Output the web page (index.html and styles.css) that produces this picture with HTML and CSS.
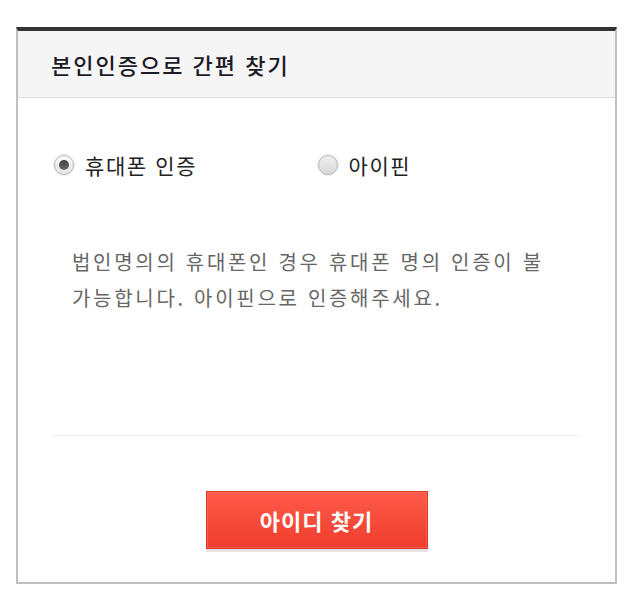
FILE: index.html
```html
<!DOCTYPE html>
<html lang="ko">
    <head>
        <meta charset="UTF-8">
        <meta name="viewport" content="width=device-width, initial-scale=1.0">
        <title>본인인증으로 간편 찾기</title>
        <link rel="stylesheet" href="styles.css">
    </head>
    <body>
        <div class="box">
            <div class="boxHead">
                <h2 class="boxTitle">본인인증으로 간편 찾기</h2>
            </div>
            <div class="boxBody">
                <div class="radioRow">
                    <label class="radioItem">
                        <span class="radio checked"></span>
                        <span class="radioText">휴대폰 인증</span>
                    </label>
                    <label class="radioItem">
                        <span class="radio"></span>
                        <span class="radioText">아이핀</span>
                    </label>
                </div>
                <p class="notice">법인명의의 휴대폰인 경우 휴대폰 명의 인증이 불가능합니다. 아이핀으로 인증해주세요.</p>
                <div class="divider"></div>
                <div class="btnArea">
                    <button class="btnFind">아이디 찾기</button>
                </div>
            </div>
        </div>
    </body>
</html>
```

FILE: styles.css
```css
body{
    margin : 0;
    background-color : #ffffff;
    font-family : "Noto Sans CJK KR", "Noto Sans", sans-serif;
}

.box{
    width : 597px;
    margin-top : 27px;
    margin-left : 16px;
    border : 2px solid #c0c0c0;
    border-top : 4px solid #333333;
    background-color : #ffffff;
}

.boxHead{
    height : 66px;
    background-color : #f5f5f5;
    border-bottom : 1px solid #dddddd;
    display : flex;
    align-items : center;
    padding-left : 33px;
}

.boxTitle{
    margin : 0;
    font-size : 22px;
    font-weight : 500;
    letter-spacing : 2px;
    color : #1c1a26;
}

.boxBody{
    padding : 0 35px 33px 35px;
}

.radioRow{
    display : flex;
    height : 30px;
    margin-top : 52px;
}

.radioItem{
    display : flex;
    align-items : center;
    width : 263px;
    padding-left : 1px;
}

.radio{
    width : 20px;
    height : 20px;
    border-radius : 50%;
    border : 1px solid #b8b8b8;
    background : linear-gradient(#f2f2f2, #d6d6d6);
    box-shadow : 0 0 0 1px #eeeeee;
    display : flex;
    align-items : center;
    justify-content : center;
    box-sizing : border-box;
}

.radio.checked{
    background : linear-gradient(#fafafa, #e4e4e4);
}

.radio.checked::after{
    content : "";
    width : 10px;
    height : 10px;
    border-radius : 50%;
    background : linear-gradient(#444444, #666666);
}

.radioText{
    margin-left : 11px;
    font-size : 21px;
    color : #222222;
    letter-spacing : 1.6px;
}

.notice{
    margin : 64px 0 0 0;
    padding-left : 19px;
    width : 490px;
    font-size : 20px;
    line-height : 36px;
    letter-spacing : 2.7px;
    color : #666666;
}

.divider{
    height : 1px;
    margin-top : 119px;
    background-color : #f1f1f1;
}

.btnArea{
    display : flex;
    justify-content : center;
    margin-top : 55px;
}

.btnFind{
    width : 222px;
    height : 58px;
    border : 1px solid #d83627;
    background : linear-gradient(#ff5a4a, #ee3d2c);
    box-shadow : inset 0 0 0 1px rgba(255,120,100,0.5), 0 3px 0 #e9e4e4;
    color : #ffffff;
    font-family : "Noto Sans CJK KR", "Noto Sans", sans-serif;
    font-size : 22px;
    font-weight : 700;
    letter-spacing : 1px;
}
```
